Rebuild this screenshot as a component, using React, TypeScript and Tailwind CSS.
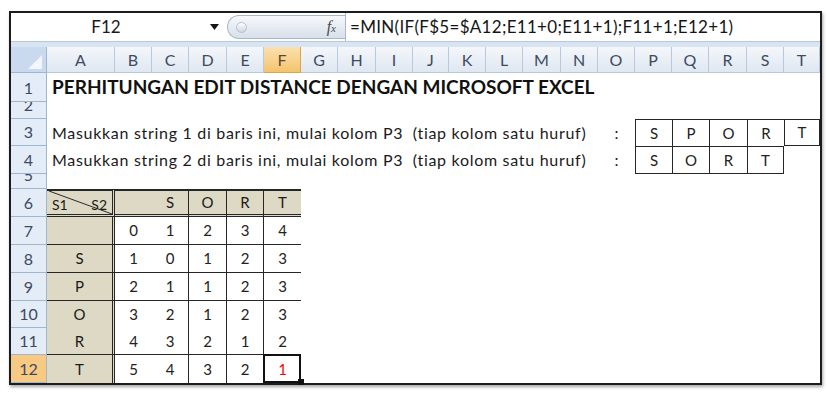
import React from "react";

const COLS = ["A", "B", "C", "D", "E", "F", "G", "H", "I", "J", "K", "L", "M", "N", "O", "P", "Q", "R", "S", "T"];

const FORMULA = "=MIN(IF(F$5=$A12;E11+0;E11+1);F11+1;E12+1)";

const TABLE = [
  { row: 7, label: "", vals: ["0", "1", "2", "3", "4"] },
  { row: 8, label: "S", vals: ["1", "0", "1", "2", "3"] },
  { row: 9, label: "P", vals: ["2", "1", "1", "2", "3"] },
  { row: 10, label: "O", vals: ["3", "2", "1", "2", "3"] },
  { row: 11, label: "R", vals: ["4", "3", "2", "1", "2"] },
  { row: 12, label: "T", vals: ["5", "4", "3", "2", "1"] },
];

function RowHead({ n, active = false }: { n: number; active?: boolean }) {
  return (
    <div
      className={`flex items-end justify-center overflow-hidden border-b border-r border-[#9eb6ce] text-[16px] text-[#3b4a5f] ${
        active ? "bg-[#f8c983]" : "bg-[#e4ecf7]"
      }`}
    >
      <span className="block leading-[27px]">{n}</span>
    </div>
  );
}

function ColHead({ letter }: { letter: string }) {
  const active = letter === "F";
  return (
    <div
      className={`flex items-center justify-center border-b border-r text-[16px] ${
        active
          ? "border-[#d9a44e] bg-linear-to-b from-[#fbe0ae] to-[#f4c46c] text-[#5a4a30]"
          : "border-[#b9c9dd] bg-linear-to-b from-[#f4f7fb] to-[#dfe7f1] text-[#3d4c61]"
      }`}
    >
      {letter}
    </div>
  );
}

function Box({ ch, className = "" }: { ch: string; className?: string }) {
  return (
    <div className={`flex items-center justify-center border-[#262626] text-[15px] text-[#222] ${className}`}>
      {ch}
    </div>
  );
}

export default function App() {
  return (
    <div className="h-[407px] w-[827px] bg-white pl-[9px] pt-[11px] font-['Lato','Liberation_Sans',sans-serif] text-[#1a1a1a]">
      <div className="w-[813px] border-2 border-[#1c1c1c] shadow-[1px_2px_3px_rgba(0,0,0,0.35)]">
        {/* formula bar */}
        <div className="flex h-[28px] items-center bg-white">
          <div className="w-[190px] text-center text-[17px]">F12</div>
          <div className="flex w-[26px] justify-center">
            <svg width="9" height="6" viewBox="0 0 9 6">
              <path d="M0 0H9L4.5 6Z" fill="#151515" />
            </svg>
          </div>
          <div className="flex h-[24px] w-[118px] items-center rounded-l-full border border-r-0 border-[#a9b7c8] bg-linear-to-b from-[#f6f8fb] to-[#d8e0ea]">
            <span className="ml-[8px] h-[11px] w-[11px] rounded-full border border-[#b5c0cd] bg-linear-to-b from-white to-[#cdd6e1]" />
            <span className="ml-auto mr-[9px] font-['Liberation_Serif',serif] text-[16px] italic text-[#4a4a4a]">
              f<span className="text-[11px]">x</span>
            </span>
          </div>
          <div className="flex h-full flex-1 items-center border-l border-[#a9b7c8] pl-[4px] text-[17px] tracking-[0.3px] text-[#151515]">
            {FORMULA}
          </div>
        </div>
        <div className="h-[6px] border-t border-[#b7c8dc] bg-[#d9e4f2]" />

        {/* sheet */}
        <div className="grid grid-cols-[36px_68px_37px_37px_38px_37px_37px_37px_38px_37px_36px_37px_37px_38px_37px_37px_37px_37px_38px_37px_36px] grid-rows-[26px_29px_17px_27px_28px_15px_28px_28px_28px_28px_27px_27px_28px]">
          <div className="relative border-b border-r border-[#9eb6ce] bg-[#c9d9ee]">
            <svg className="absolute bottom-[3px] right-[4px]" width="14" height="14" viewBox="0 0 14 14">
              <path d="M14 0V14H0Z" fill="#f2f6fb" />
            </svg>
          </div>
          {COLS.map((c) => (
            <ColHead key={c} letter={c} />
          ))}

          <RowHead n={1} />
          <div className="col-span-20 flex items-center pl-[5px] text-[19px] font-bold whitespace-nowrap text-[#111]">
            PERHITUNGAN EDIT DISTANCE DENGAN MICROSOFT EXCEL
          </div>

          <RowHead n={2} />
          <div className="col-span-20" />

          <RowHead n={3} />
          <div className="col-span-14 flex items-center pl-[5px] text-[16px] tracking-[0.7px] whitespace-pre">
            Masukkan string 1 di baris ini, mulai kolom P3  (tiap kolom satu huruf)
          </div>
          <div className="flex items-center justify-center text-[16px]">:</div>
          <Box ch="S" className="border-l border-t" />
          <Box ch="P" className="border-l border-t" />
          <Box ch="O" className="border-l border-t" />
          <Box ch="R" className="border-l border-t" />
          <Box ch="T" className="border-b border-l border-r border-t" />

          <RowHead n={4} />
          <div className="col-span-14 flex items-center pl-[5px] text-[16px] tracking-[0.7px] whitespace-pre">
            Masukkan string 2 di baris ini, mulai kolom P3  (tiap kolom satu huruf)
          </div>
          <div className="flex items-center justify-center text-[16px]">:</div>
          <Box ch="S" className="border-b border-l border-t" />
          <Box ch="O" className="border-b border-l border-t" />
          <Box ch="R" className="border-b border-l border-t" />
          <Box ch="T" className="border-b border-l border-r border-t" />
          <div />

          <RowHead n={5} />
          <div className="col-span-20" />

          {/* distance matrix header */}
          <RowHead n={6} />
          <div className="relative flex items-center justify-between border-b-[3px] border-r-[3px] border-t-2 border-[#262626] bg-[#ddd9c4] px-[5px] text-[14px] [border-bottom-style:double] [border-right-style:double]">
            <svg className="absolute inset-0 h-full w-full" preserveAspectRatio="none" viewBox="0 0 65 23">
              <path d="M2 0L65 23" stroke="#2a2a2a" strokeWidth="1" fill="none" />
            </svg>
            <span className="mt-[4px]">S1</span>
            <span className="mt-[4px]">S2</span>
          </div>
          {["", "S", "O", "R", "T"].map((h, i) => (
            <div
              key={i}
              className={`flex items-center justify-center border-b-[3px] border-t-2 border-[#262626] bg-[#ddd9c4] text-[15px] [border-bottom-style:double] ${
                i >= 1 && i <= 3 ? "border-r" : ""
              }`}
            >
              {h}
            </div>
          ))}
          <div className="col-span-14" />

          {TABLE.map((r) => {
            const lined = r.row === 7 || r.row === 8 || r.row === 9 || r.row === 11;
            return (
              <React.Fragment key={r.row}>
                <RowHead n={r.row} active={r.row === 12} />
                <div
                  className={`flex items-center justify-center border-r-[3px] border-[#262626] bg-[#ddd9c4] text-[15px] [border-right-style:double] ${
                    lined ? "border-b" : ""
                  }`}
                >
                  {r.label}
                </div>
                {r.vals.map((v, i) => {
                  const selected = r.row === 12 && i === 4;
                  return (
                    <div
                      key={i}
                      className={`relative flex items-center justify-center border-[#262626] text-[15px] ${lined ? "border-b" : ""} ${
                        i >= 1 && i <= 3 ? "border-r" : ""
                      } ${selected ? "text-[#ff0000]" : "text-[#222]"}`}
                    >
                      {v}
                      {selected && (
                        <>
                          <span className="absolute -left-px -top-px bottom-0 right-0 border-2 border-[#111]" />
                          <span className="absolute -bottom-[2px] -right-[3px] h-[6px] w-[6px] bg-[#111]" />
                        </>
                      )}
                    </div>
                  );
                })}
                <div className="col-span-14" />
              </React.Fragment>
            );
          })}
        </div>
      </div>
    </div>
  );
}
